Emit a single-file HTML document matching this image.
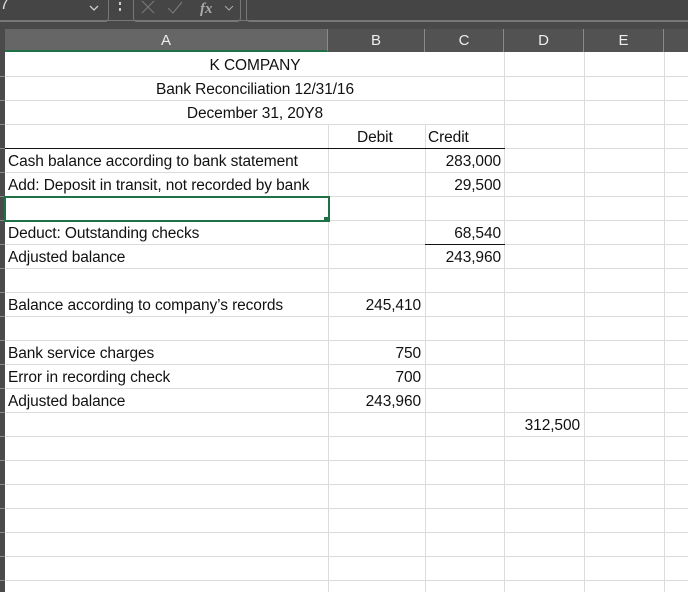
<!DOCTYPE html>
<html><head><style>
body{margin:0;width:688px;height:592px;overflow:hidden;background:#fff;font-family:"Liberation Sans",sans-serif;position:relative}
.a{position:absolute}
.t{position:absolute;font-size:15.5px;color:#111;line-height:24px;white-space:nowrap;margin-top:2px;letter-spacing:-0.1px}
.h{position:absolute;top:29px;height:23px;color:#eee;font-size:15px;line-height:23px;text-align:center;border-right:1px solid #8a8a8a;box-sizing:border-box}
.vl{position:absolute;top:52px;bottom:0;width:1px;background:#dcdcdc}
.r{text-align:right}
</style></head><body>
<div class="a" style="left:0;top:0;width:688px;height:21px;background:#454545"></div>
<div class="a" style="left:0;top:20px;width:688px;height:1px;background:#777"></div>
<div class="a" style="left:0;top:21px;width:688px;height:8px;background:#494949"></div>
<div class="a" style="left:-10px;top:-6px;width:117px;height:26px;border:1px solid #777;border-radius:4px"></div>
<div class="a" style="left:0;top:-4px;color:#ddd;font-size:16px">7</div>
<svg class="a" style="left:88px;top:3px" width="14" height="10"><path d="M2 3L6 7L10 3" stroke="#ccc" stroke-width="1.3" fill="none"/></svg>
<div class="a" style="left:119px;top:2px;width:2px;height:3px;background:#ccc"></div>
<div class="a" style="left:119px;top:8px;width:2px;height:3px;background:#ccc"></div>
<div class="a" style="left:133px;top:-6px;width:106px;height:26px;border:1px solid #777;border-radius:4px"></div>
<svg class="a" style="left:140px;top:0" width="100" height="18"><path d="M2 1L14 13M14 1L2 13" stroke="#777" stroke-width="1.2"/><path d="M28 8L33 13L42 2" stroke="#777" stroke-width="1.2" fill="none"/><text x="60" y="13" font-family="Liberation Serif" font-style="italic" font-weight="bold" font-size="15" fill="#aaa">fx</text><path d="M85 6L89 10L93 6" stroke="#aaa" fill="none"/></svg>
<div class="a" style="left:246px;top:-6px;width:460px;height:26px;border:1px solid #777;border-radius:4px"></div>
<div class="a" style="left:0;top:29px;width:688px;height:23px;background:#525252"></div>
<div class="a" style="left:0;top:29px;width:5px;height:563px;background:#4a4a4a"></div>
<div class="h" style="left:5px;width:323px;background:#666;border-bottom:2px solid #1e7145">A</div>
<div class="h" style="left:328px;width:97px">B</div>
<div class="h" style="left:425px;width:79px">C</div>
<div class="h" style="left:504px;width:80px">D</div>
<div class="h" style="left:584px;width:80px">E</div>
<div class="vl" style="left:504px"></div><div class="vl" style="left:584px"></div><div class="vl" style="left:664px"></div>
<div class="a" style="left:328px;top:124px;bottom:0;width:1px;background:#dcdcdc"></div>
<div class="a" style="left:425px;top:124px;bottom:0;width:1px;background:#dcdcdc"></div>
<div id="g"></div>
<script>
let s='';for(let y=76;y<592;y+=24){s+=`<div class="a" style="left:5px;top:${y}px;width:683px;height:1px;background:#dcdcdc"></div><div class="a" style="left:0;top:${y}px;width:5px;height:1px;background:#888"></div>`}
document.getElementById('g').innerHTML=s;
</script>
<div class="a" style="left:5px;top:148px;width:500px;height:1px;background:#111"></div>
<div class="a" style="left:425px;top:244px;width:80px;height:1px;background:#111"></div>
<div class="a" style="left:4px;top:196px;width:322px;height:22px;border:2px solid #1e7145"></div>
<div class="a" style="left:324px;top:217px;width:5px;height:5px;background:#1e7145"></div>
<div class="t" style="left:5px;width:500px;top:52px;text-align:center">K COMPANY</div>
<div class="t" style="left:5px;width:500px;top:76px;text-align:center">Bank Reconciliation 12/31/16</div>
<div class="t" style="left:5px;width:500px;top:100px;text-align:center">December 31, 20Y8</div>
<div class="t" style="left:357px;top:124px">Debit</div>
<div class="t" style="left:428px;top:124px">Credit</div>
<div class="t" style="left:8px;top:148px">Cash balance according to bank statement</div>
<div class="t r" style="left:425px;width:76px;top:148px">283,000</div>
<div class="t" style="left:8px;top:172px">Add: Deposit in transit, not recorded by bank</div>
<div class="t r" style="left:425px;width:76px;top:172px">29,500</div>
<div class="t" style="left:8px;top:220px">Deduct: Outstanding checks</div>
<div class="t r" style="left:425px;width:76px;top:220px">68,540</div>
<div class="t" style="left:8px;top:244px">Adjusted balance</div>
<div class="t r" style="left:425px;width:76px;top:244px">243,960</div>
<div class="t" style="left:8px;top:292px">Balance according to company’s records</div>
<div class="t r" style="left:328px;width:93px;top:292px">245,410</div>
<div class="t" style="left:8px;top:340px">Bank service charges</div>
<div class="t r" style="left:328px;width:93px;top:340px">750</div>
<div class="t" style="left:8px;top:364px">Error in recording check</div>
<div class="t r" style="left:328px;width:93px;top:364px">700</div>
<div class="t" style="left:8px;top:388px">Adjusted balance</div>
<div class="t r" style="left:328px;width:93px;top:388px">243,960</div>
<div class="t r" style="left:504px;width:76px;top:412px">312,500</div>
</body></html>
